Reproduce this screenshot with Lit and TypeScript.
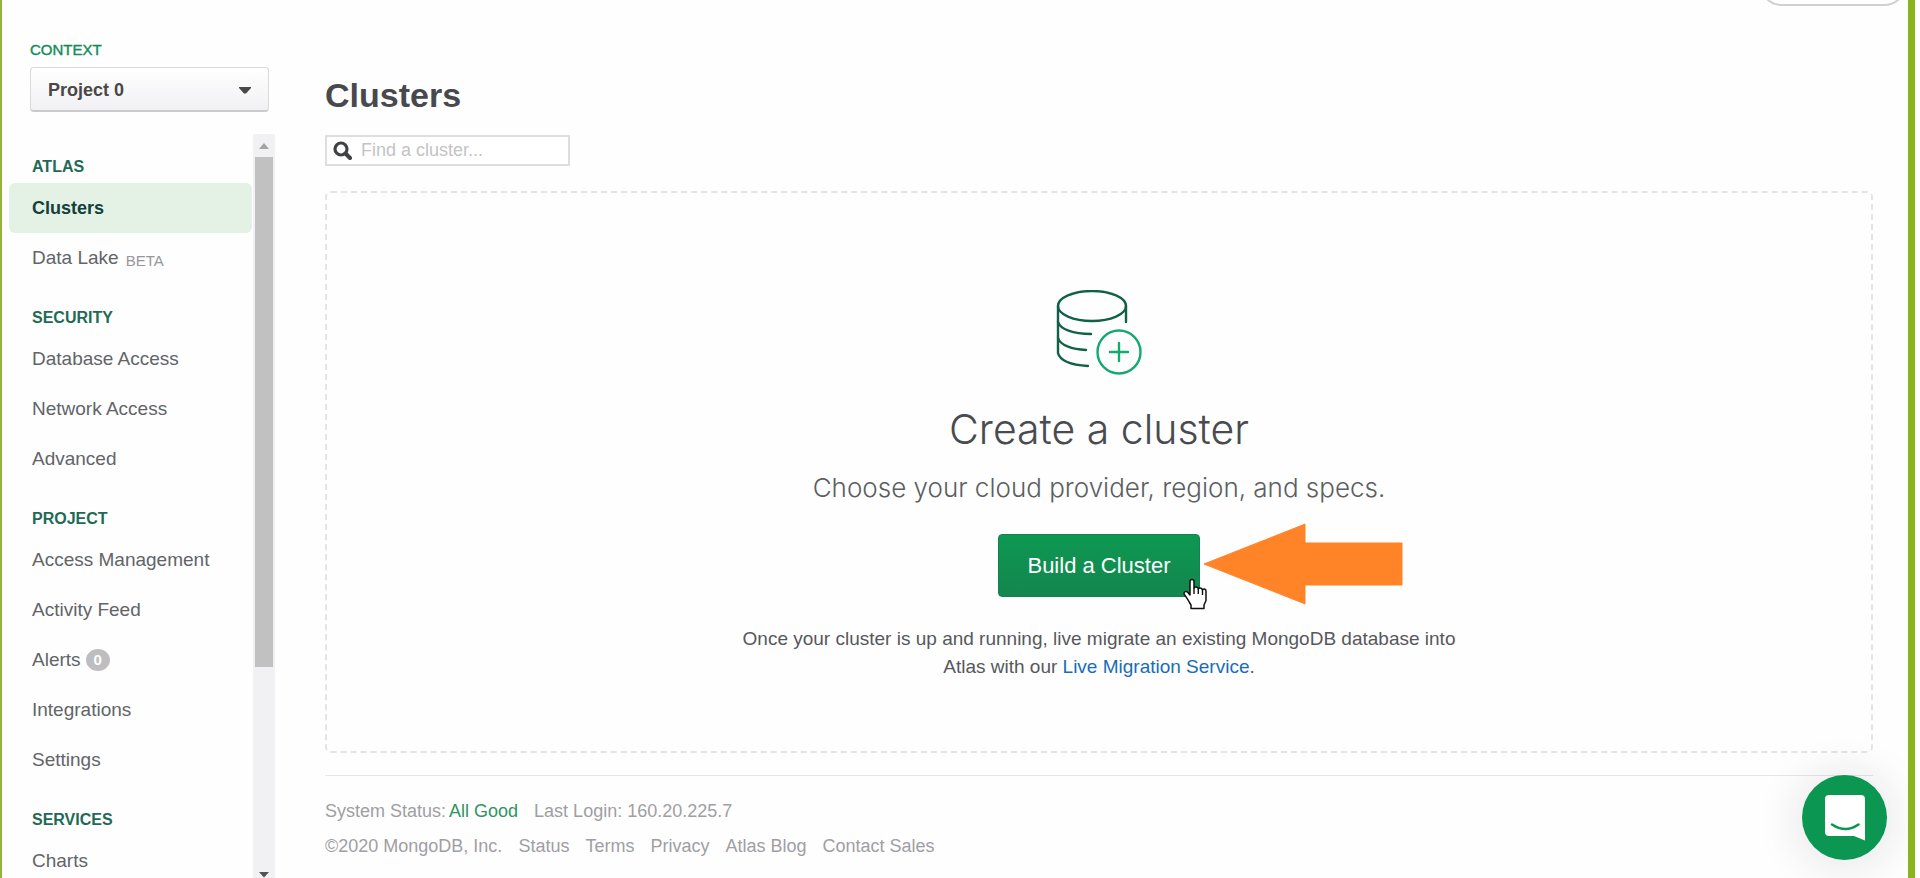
import { LitElement, html, css, svg, nothing } from "lit";
import { customElement, property } from "lit/decorators.js";
import { classMap } from "lit/directives/class-map.js";

interface NavItem {
  label: string;
  active?: boolean;
  tag?: string;
  count?: number;
}

interface NavGroup {
  title: string;
  items: NavItem[];
}

const NAV: NavGroup[] = [
  { title: "Atlas", items: [{ label: "Clusters", active: true }, { label: "Data Lake", tag: "BETA" }] },
  { title: "Security", items: [{ label: "Database Access" }, { label: "Network Access" }, { label: "Advanced" }] },
  {
    title: "Project",
    items: [
      { label: "Access Management" },
      { label: "Activity Feed" },
      { label: "Alerts", count: 0 },
      { label: "Integrations" },
      { label: "Settings" },
    ],
  },
  { title: "Services", items: [{ label: "Charts" }] },
];

const FOOTER_LINKS = ["Status", "Terms", "Privacy", "Atlas Blog", "Contact Sales"];

@customElement("atlas-sidebar")
export class AtlasSidebar extends LitElement {
  @property({ attribute: false }) groups: NavGroup[] = [];

  static styles = css`
    :host {
      display: flex;
      flex-direction: column;
      width: 273px;
      height: 100vh;
      flex: none;
      overflow: hidden;
      padding-top: 38px;
      box-sizing: border-box;
    }
    .context {
      display: flex;
      flex-direction: column;
      gap: 5px;
      padding: 0 6px 0 28px;
      margin-bottom: 22px;
    }
    .context-label {
      font-size: 15px;
      line-height: 24px;
      color: #138a58;
      text-transform: uppercase;
      -webkit-text-stroke: 0.4px currentColor;
    }
    .picker {
      display: grid;
      align-items: center;
    }
    .picker > * {
      grid-area: 1 / 1;
    }
    .select {
      appearance: none;
      width: 100%;
      height: 45px;
      padding: 2px 40px 0 17px;
      border: 1px solid #dadadc;
      border-bottom: 2px solid #cacacc;
      border-radius: 4px;
      background: linear-gradient(#ffffff, #f1f0f3);
      color: #494747;
      font: bold 18px "Liberation Sans", Arial, sans-serif;
    }
    .caret {
      justify-self: end;
      margin-right: 18px;
      pointer-events: none;
    }
    .scroller {
      display: flex;
      flex: 1;
      min-height: 0;
    }
    .nav {
      flex: 1;
      overflow: hidden;
      padding: 17px 1px 0 7px;
    }
    .group-title {
      margin: 0;
      padding-left: 23px;
      font-size: 16px;
      line-height: 32px;
      font-weight: bold;
      color: #1e6a57;
      text-transform: uppercase;
    }
    .group + .group .group-title {
      padding-top: 19px;
    }
    .items {
      list-style: none;
      margin: 0;
      padding: 0;
    }
    .link {
      display: flex;
      align-items: center;
      height: 50px;
      padding-left: 23px;
      border-radius: 6px;
      font-size: 19px;
      color: #626469;
      text-decoration: none;
    }
    .link.active {
      background: #e4f1e5;
      color: #12403b;
      font-size: 18px;
      font-weight: bold;
    }
    .tag {
      margin-left: 7px;
      padding-top: 4px;
      font-size: 15px;
      color: #97979b;
    }
    .count {
      margin-left: 5px;
      width: 24px;
      height: 22px;
      border-radius: 50%;
      background: #bebec1;
      color: #fff;
      font-size: 15px;
      line-height: 22px;
      font-weight: bold;
      text-align: center;
    }
    .track {
      display: flex;
      flex-direction: column;
      align-items: center;
      width: 22px;
      background: #f1f0f3;
    }
    .arrow {
      flex: none;
      height: 23px;
      width: 12px;
    }
    .rail {
      flex: 1;
      width: 18px;
    }
    .thumb {
      height: calc(100% * 5 / 7);
      background: #c1c1c1;
    }
    .arrow.down {
      height: 7px;
    }
  `;

  render() {
    return html`
      <div class="context">
        <label class="context-label" for="project">Context</label>
        <div class="picker">
          <select class="select" id="project">
            <option>Project 0</option>
          </select>
          <svg class="caret" width="12" height="8" viewBox="0 0 12 8"><path d="M0 1h12v1L7 7.500H5L0 2z" fill="#494747" /></svg>
        </div>
      </div>
      <div class="scroller">
        <nav class="nav">
          ${this.groups.map(
            (group) => html`
              <section class="group">
                <h2 class="group-title">${group.title}</h2>
                <ul class="items">
                  ${group.items.map(
                    (item) => html`<li>
                      <a class=${classMap({ link: true, active: !!item.active })} href="#"
                        >${item.label}${item.tag ? html`<span class="tag">${item.tag}</span>` : nothing}${item.count !== undefined
                          ? html`<span class="count">${item.count}</span>`
                          : nothing}</a
                      >
                    </li>`
                  )}
                </ul>
              </section>
            `
          )}
        </nav>
        <div class="track">
          <svg class="arrow" viewBox="0 0 12 23"><path d="M1 15h10L6 9z" fill="#a3a3a3" /></svg>
          <div class="rail"><div class="thumb"></div></div>
          <svg class="arrow down" viewBox="0 0 12 7"><path d="M1 1h10L6 6.5z" fill="#505050" /></svg>
        </div>
      </div>
    `;
  }
}

const clusterIcon = svg`
  <g fill="none" stroke="#116149" stroke-width="2.4" stroke-linecap="round">
    <ellipse cx="36" cy="16" rx="34" ry="15" />
    <path d="M70 16v16" />
    <path d="M2 16v47c2 8 14 12 30 13" />
    <path d="M2 32c2 7 15 12 33 12" />
    <path d="M2 48c2 7 14 11.500 28 12" />
  </g>
  <g fill="none" stroke="#13aa6f" stroke-width="2.4" stroke-linecap="round">
    <circle cx="63" cy="62" r="21.500" />
    <path d="M63 53v18M54 62h18" />
  </g>`;

@customElement("create-cluster")
export class CreateCluster extends LitElement {
  static styles = css`
    :host {
      display: flex;
      flex-direction: column;
      align-items: center;
      box-sizing: border-box;
      padding: 97px 20px 70px;
      border: 2px dashed #e4e4e6;
      border-radius: 6px;
      text-align: center;
      color: #494b4f;
    }
    .icon {
      display: block;
    }
    .title {
      margin: 27px 0 16px;
      font-family: Inter, "Liberation Sans", sans-serif;
      font-size: 41px;
      line-height: 52px;
      font-weight: 300;
    }
    .lead {
      margin: 0 0 29px;
      font-family: Inter, "Liberation Sans", sans-serif;
      font-size: 26px;
      line-height: 34px;
      font-weight: 300;
      color: #5c5e62;
    }
    .action {
      position: relative;
    }
    .build {
      display: block;
      height: 63px;
      padding: 0 28px;
      border: 1px solid #128250;
      border-radius: 4px;
      background: linear-gradient(#0e9852, #13864e);
      color: #fff;
      font: 22px "Liberation Sans", Arial, sans-serif;
    }
    .pointer-arrow {
      position: absolute;
      left: calc(100% + 3px);
      top: -11px;
    }
    .cursor {
      position: absolute;
      right: -8px;
      top: 44px;
    }
    .note {
      max-width: 740px;
      margin: 28px 0 0;
      font-size: 19px;
      line-height: 28px;
      color: #56585c;
    }
    .link {
      color: #1a6cb8;
      text-decoration: none;
    }
  `;

  render() {
    return html`
      <svg class="icon" width="86" height="86" viewBox="0 0 86 86">${clusterIcon}</svg>
      <h2 class="title">Create a cluster</h2>
      <p class="lead">Choose your cloud provider, region, and specs.</p>
      <div class="action">
        <button class="build" type="button">Build a Cluster</button>
        <svg class="pointer-arrow" width="200" height="82" viewBox="0 0 200 82">
          <path
            d="M1 41L101 1.500L102 1V20H199V62H102V81L101 80.500Z"
            fill="#ff8427"
            stroke="#ff8427"
            stroke-width="1"
            stroke-linejoin="round"
          />
        </svg>
        <svg class="cursor" width="25" height="32" viewBox="0 0 25 32">
          <path
            d="M9 1.500c-1.400 0-2 1-2 2V17l-2.600-3C3.400 13 1 13.500 1 15.500c0 1 4.500 6.500 5.500 9L8 27v3.500h13V27l2-4.500V13c0-2.500-3-2.500-3.500-1C19 9.500 15.800 9.500 15.300 11 15 8.500 11.500 8.500 11 10V3.500c0-1-.6-2-2-2z"
            fill="#fff"
            stroke="#111"
            stroke-width="1.500"
            stroke-linejoin="round"
          />
          <path d="M11 10v6M15.300 11v5M19.500 12v5" stroke="#111" stroke-width="1.400" />
        </svg>
      </div>
      <p class="note">
        Once your cluster is up and running, live migrate an existing MongoDB database into Atlas with our
        <a class="link" href="#">Live Migration Service</a>.
      </p>
    `;
  }
}

@customElement("app-root")
export class AppRoot extends LitElement {
  static styles = css`
    :host {
      display: block;
      height: 100vh;
      overflow: hidden;
      padding-right: 5px;
      box-sizing: border-box;
      background: #fff;
      font-family: "Liberation Sans", Arial, Helvetica, sans-serif;
    }
    .frame {
      position: relative;
      display: flex;
      box-sizing: border-box;
      height: 100%;
      border-left: 2px solid #93b438;
      border-right: 7px solid #8ab41c;
      background: #fefefe;
      overflow: hidden;
    }
    .main {
      flex: 1;
      min-width: 0;
      padding: 75px 35px 0 50px;
    }
    .heading {
      margin: 0 0 20px;
      font-size: 34px;
      line-height: 40px;
      font-weight: bold;
      color: #47494e;
    }
    .search {
      display: flex;
      align-items: center;
      gap: 9px;
      width: 245px;
      height: 31px;
      box-sizing: border-box;
      padding-left: 6px;
      margin-bottom: 25px;
      border: 2px solid #dedee0;
      background: #fff;
    }
    .search-icon {
      flex: none;
    }
    .search-input {
      flex: 1;
      min-width: 0;
      padding: 0;
      border: 0;
      outline: 0;
      background: none;
      font: 18px "Liberation Sans", Arial, sans-serif;
      color: #47494e;
    }
    .search-input::placeholder {
      color: #c3c3c6;
    }
    .footer {
      margin-top: 22px;
      padding-top: 18px;
      border-top: 1px solid #e6e6e8;
      font-size: 18px;
      line-height: 35px;
      color: #a09ea3;
    }
    .row {
      display: flex;
      flex-wrap: wrap;
      gap: 0 16px;
    }
    .footer-link {
      color: inherit;
      text-decoration: none;
    }
    .status {
      display: flex;
      gap: 3px;
    }
    .good {
      color: #2f9462;
      text-decoration: none;
    }
    .pill {
      position: absolute;
      top: -40px;
      right: 1px;
      width: 148px;
      height: 46px;
      border: 2px solid #d0d0d3;
      border-radius: 23px;
      background: #fff;
      box-sizing: border-box;
    }
    .chat {
      position: absolute;
      right: 21px;
      bottom: 18px;
      display: grid;
      place-items: center;
      width: 85px;
      height: 85px;
      padding: 0;
      border: 0;
      border-radius: 50%;
      background: #0b9751;
      box-shadow: 0 2px 48px rgba(40, 30, 60, 0.14);
    }
  `;

  render() {
    return html`
      <div class="frame">
        <atlas-sidebar .groups=${NAV}></atlas-sidebar>
        <main class="main">
          <h1 class="heading">Clusters</h1>
          <label class="search">
            <svg class="search-icon" width="19" height="19" viewBox="0 0 19 19" fill="none" stroke="#3f4145">
              <circle cx="8" cy="8" r="6" stroke-width="3.200" />
              <path d="M12.500 12.500l4.500 4.500" stroke-width="4" stroke-linecap="round" />
            </svg>
            <input class="search-input" type="text" placeholder="Find a cluster..." aria-label="Find a cluster" />
          </label>
          <create-cluster></create-cluster>
          <footer class="footer">
            <div class="row">
              <span class="status"><span>System Status:</span><a class="good" href="#">All Good</a></span>
              <span>Last Login: 160.20.225.7</span>
            </div>
            <div class="row">
              <span>©2020 MongoDB, Inc.</span>
              ${FOOTER_LINKS.map((label) => html`<a class="footer-link" href="#">${label}</a>`)}
            </div>
          </footer>
        </main>
        <button class="pill" type="button" aria-label="Account"></button>
        <button class="chat" type="button" aria-label="Open chat">
          <svg width="40" height="46" viewBox="0 0 40 46">
            <path d="M4 0h32a4 4 0 0 1 4 4v41.500L29 41H4a4 4 0 0 1-4-4V4a4 4 0 0 1 4-4z" fill="#fff" />
            <path d="M7 29.500q13.500 9 26.500 0" fill="none" stroke="#0b9751" stroke-width="2.600" stroke-linecap="round" />
          </svg>
        </button>
      </div>
    `;
  }
}
